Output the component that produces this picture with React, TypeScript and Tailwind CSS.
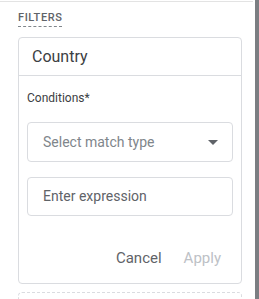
export default function App() {
  return (
    <div className="flex h-[299px] w-[259px] overflow-hidden bg-white font-['Roboto',sans-serif]">
      <div className="w-[255px] shrink-0">
        {/* top rule */}
        <div className="mt-[1px] w-[253px] border-t border-[#e3e3e3]" />

        <div className="pl-[18px] pt-[8px]">
          <div className="w-fit border-b border-dashed border-[#80868b] text-[11px] leading-[16px] font-medium tracking-[0.6px] text-[#5f6368] uppercase">
            Filters
          </div>

          {/* filter card */}
          <div className="mt-[10px] w-[224px] rounded-[4px] border border-[#dadce0]">
            <div className="flex h-[38px] items-center border-b border-[#dadce0] pl-[13px] text-[16px] text-[#3c4043]">
              Country
            </div>

            <div className="px-[8px] pt-[14px] pb-[7px]">
              <div className="text-[12px] leading-[16px] text-[#3c4043]">Conditions*</div>

              <div className="mt-[16px] flex h-[40px] items-center justify-between rounded-[4px] border border-[#dadce0] pr-[14px] pl-[15px] text-[14px] text-[#80868b]">
                <span>Select match type</span>
                <svg width="10" height="5" viewBox="0 0 10 5">
                  <path d="M0 0 L10 0 L5 5 Z" fill="#5f6368" />
                </svg>
              </div>

              <div className="mt-[15px] flex h-[39px] items-center rounded-[4px] border border-[#dadce0] pl-[15px] text-[14px] text-[#5f6368]">
                Enter expression
              </div>

              <div className="mt-[24px] flex h-[36px] items-center justify-end gap-[6px] pr-[4px] text-[15px]">
                <button className="px-[8px] text-[#5f6368]">Cancel</button>
                <button className="px-[8px] text-[#bdc1c6]">Apply</button>
              </div>
            </div>
          </div>

          {/* next (empty) filter slot */}
          <div className="mt-[8px] h-[40px] w-[224px] rounded-[4px] border border-dashed border-[#dadce0]" />
        </div>
      </div>

      {/* scrollbar */}
      <div className="h-full w-[4px] bg-[#7b7e82]" />
    </div>
  );
}
